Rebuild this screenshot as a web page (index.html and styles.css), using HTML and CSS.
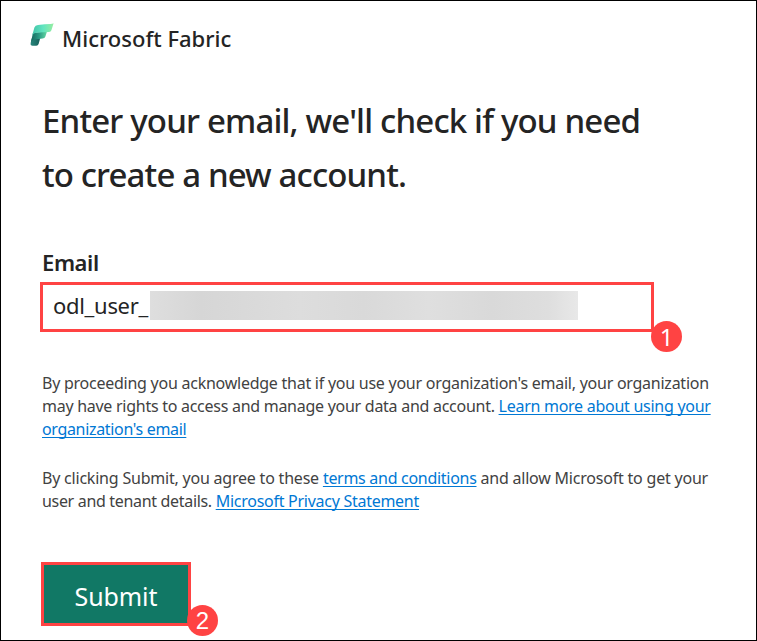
FILE: index.html
```html
<!DOCTYPE html>
<html lang="en">
<head>
<meta charset="utf-8">
<title>Microsoft Fabric</title>
<link rel="stylesheet" href="styles.css">
</head>
<body>
<main class="page">
  <header class="brand">
    <svg class="logo" width="24" height="24" viewBox="0 0 24 24" aria-hidden="true">
      <defs>
        <linearGradient id="top" x1="0" y1="0" x2="1" y2="0"><stop offset="0" stop-color="#42c3a8"/><stop offset=".5" stop-color="#60e4c0"/><stop offset="1" stop-color="#96eda0"/></linearGradient>
        <linearGradient id="mid" x1="0" y1="0" x2="1" y2="0"><stop offset="0" stop-color="#17665d"/><stop offset=".5" stop-color="#299a83"/><stop offset="1" stop-color="#65d9a5"/></linearGradient>
        <linearGradient id="low" x1="0" y1="0" x2="1" y2="0"><stop offset="0" stop-color="#28867b"/><stop offset="1" stop-color="#17605b"/></linearGradient>
      </defs>
      <path fill="url(#low)" d="M1.6 15.5 10.2 15.2 8.6 21Q8 22.8 6.3 22.8H2.5Q.1 22.8 .7 20Z"/>
      <path fill="url(#mid)" d="M3 9.8 17 8.6 15.4 13.5Q14.8 15.4 12.5 15.6L6 16.2Q2 16.5 .9 19.6L2.5 12Z"/>
      <path fill="url(#top)" d="M8 1.9Q15 1.3 20.5 1 22.5.8 23.6.2L21.4 7.2Q20.9 8.8 19 8.9L8 9.5Q3.9 9.7 2.2 12.5L4.4 4.6Q5.2 2.1 8 1.9Z"/>
    </svg>
    <span class="brand-name">Microsoft Fabric</span>
  </header>
  <h1 class="title"><span class="line title-a">Enter your email, we'll check if you need</span> <span class="line title-b">to create a new account.</span></h1>
  <label class="label">Email</label>
  <div class="field">
    <span class="value">odl_user_</span><span class="redacted"></span>
    <span class="badge badge-one">1</span>
  </div>
  <p class="note"><span class="line n1">By proceeding you acknowledge that if you use your organization's email, your organization</span> <span class="line n2">may have rights to access and manage your data and account. <a href="#">Learn more about using your</a></span> <span class="line n3"><a href="#">organization's email</a></span></p>
  <p class="note terms"><span class="line n4">By clicking Submit, you agree to these <a href="#">terms and conditions</a> and allow Microsoft to get your</span> <span class="line n5">user and tenant details. <a href="#">Microsoft Privacy Statement</a></span></p>
  <div class="submit-wrap">
    <button class="submit">Submit</button>
    <span class="badge badge-two">2</span>
  </div>
</main>
</body>
</html>
```

FILE: styles.css
```css
* { box-sizing: border-box; }
body { margin: 0; background: #fff; font-family: "Noto Sans", "Open Sans", sans-serif; color: #242424; }
.page { width: 757px; height: 641px; border: 1px solid #000; padding: 20px 0 0 41px; overflow: hidden; }
.brand { display: flex; height: 36px; margin-left: -12px; }
.logo { margin-top: 2px; flex: none; }
.brand-name { margin-left: 8px; font-size: 22px; line-height: 34px; font-weight: 500; white-space: nowrap; }
.title { margin: 37px 0 0; font-size: 33px; line-height: 54px; font-weight: 500; }
.title-a { letter-spacing: -0.83px; }
.title-b { letter-spacing: -0.87px; }
.line { display: block; width: max-content; white-space: nowrap; }
.label { display: block; margin-top: 45px; font-size: 22px; line-height: 30px; font-weight: 600; letter-spacing: -0.4px; }
.field { position: relative; display: flex; align-items: center; width: 614px; height: 50px; margin: 5px 0 0 -2px; border: 3px solid #ff4343; }
.value { width: 97px; margin: -5px 0 0 10px; font-size: 22px; line-height: 30px; letter-spacing: -0.3px; white-space: nowrap; }
.redacted { width: 428px; height: 29px; margin-top: -3px; background: linear-gradient(90deg, #dedede 0, #d6d6d6 12%, #dddddd 35%, #d9d9d9 50%, #dfdfdf 65%, #d9d9d9 80%, #dedede 93%, #e8e8e8 100%); }
.badge { position: absolute; display: flex; align-items: center; justify-content: center; width: 31px; height: 31px; border-radius: 50%; background: #ff4343; color: #fff; font: 24px/31px "Noto Sans", sans-serif; }
.badge-one { left: 608px; top: 36px; }
.note { margin: 40px 0 0; font-size: 16px; line-height: 23px; color: #424242; }
.n1 { letter-spacing: -0.25px; }
.n2 { letter-spacing: -0.27px; }
.n3 { letter-spacing: -0.33px; }
.n4 { letter-spacing: -0.21px; }
.n4 a { letter-spacing: -0.29px; }
.n5 { letter-spacing: -0.32px; }
.n5 a { letter-spacing: -0.27px; }
.note a { color: #0078d4; text-decoration: underline; text-decoration-thickness: 1px; text-underline-offset: 2px; text-decoration-skip-ink: none; }
.note.terms { margin-top: 26px; }
.submit-wrap { position: relative; width: 150px; height: 64px; margin: 49px 0 0 -1px; }
.submit { display: block; width: 150px; height: 64px; margin: 0; padding: 3px 0 0; border: 3px solid #ff4343; background: #117865; color: #fff; font: 25px/34px "Noto Sans", sans-serif; letter-spacing: -0.1px; }
.badge-two { left: 146px; top: 43px; font-family: "Liberation Sans", sans-serif; }
```
